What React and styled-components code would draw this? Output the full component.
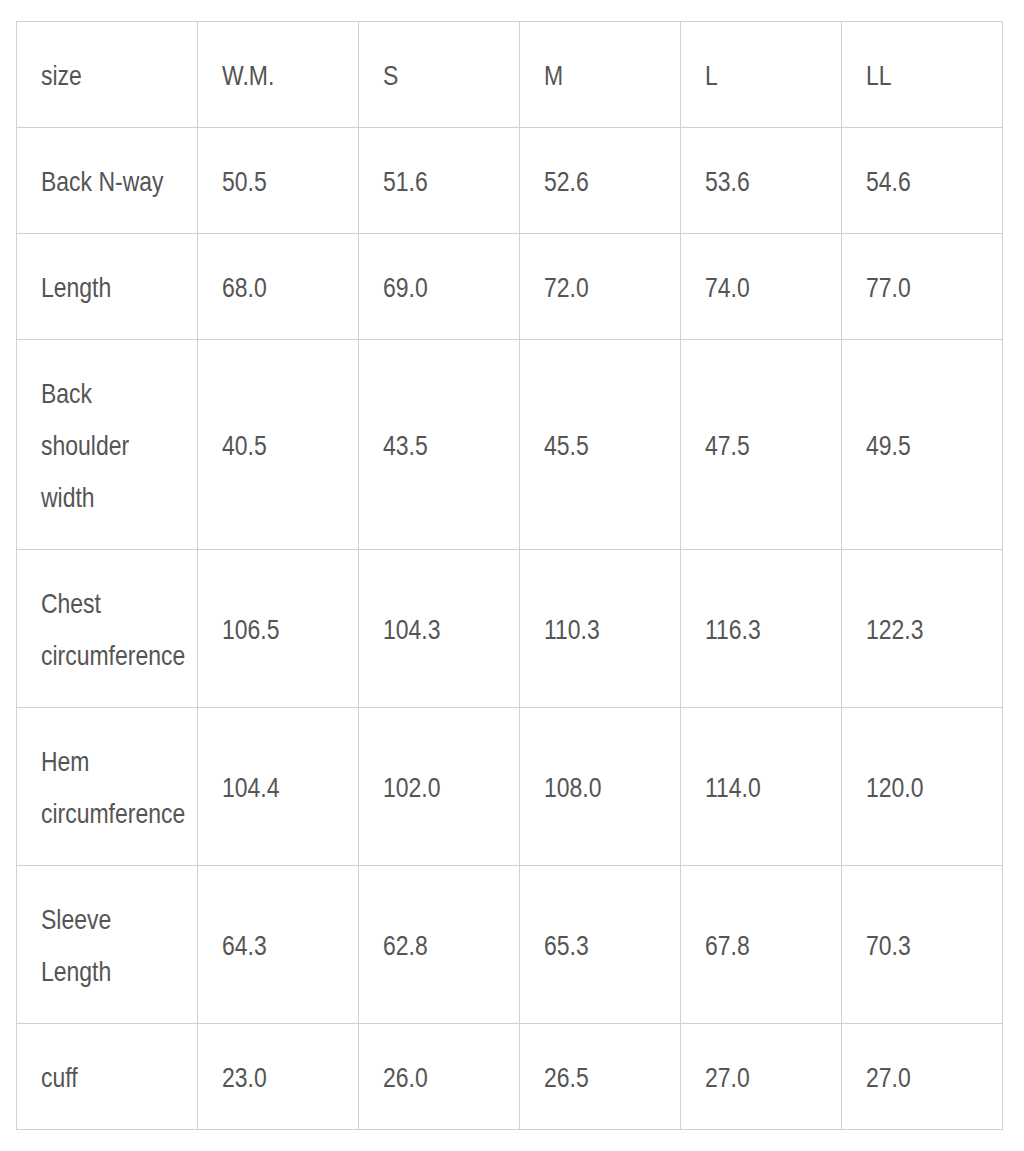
import React from "react";
import styled, { createGlobalStyle } from "styled-components";

const NARROW = 0.82;

const Global = createGlobalStyle`
  html, body {
    margin: 0;
    padding: 0;
    background: #ffffff;
  }
  body {
    font-family: "Liberation Sans", Arial, sans-serif;
  }
`;

const Page = styled.div`
  padding: 21px 16px 22px 16px;
`;

const Grid = styled.div`
  display: grid;
  grid-template-columns: 181px repeat(5, 161px);
  border-top: 1px solid #d0d0d0;
  border-left: 1px solid #d0d0d0;
  box-sizing: border-box;
  width: max-content;
`;

const Cell = styled.div`
  box-sizing: border-box;
  display: flex;
  align-items: center;
  padding: 28px 24px 25px 24px;
  border-right: 1px solid #d0d0d0;
  border-bottom: 1px solid #d0d0d0;
  font-family: "Liberation Sans", Arial, sans-serif;
  font-size: 28px;
  line-height: 52px;
  color: #555555;
  min-width: 0;
`;

/* Emulates the condensed face of the original: the text box is laid out
   wider by 1/NARROW and squeezed back, so wrapping matches the narrow width. */
const Label = styled.span`
  display: block;
  flex: none;
  width: calc(100% / ${NARROW});
  transform: scaleX(${NARROW});
  transform-origin: left center;
  white-space: normal;
  overflow-wrap: normal;
`;

const header = ["size", "W.M.", "S", "M", "L", "LL"];

const rows = [
  ["Back N-way", "50.5", "51.6", "52.6", "53.6", "54.6"],
  ["Length", "68.0", "69.0", "72.0", "74.0", "77.0"],
  ["Back shoulder width", "40.5", "43.5", "45.5", "47.5", "49.5"],
  ["Chest circumference", "106.5", "104.3", "110.3", "116.3", "122.3"],
  ["Hem circumference", "104.4", "102.0", "108.0", "114.0", "120.0"],
  ["Sleeve Length", "64.3", "62.8", "65.3", "67.8", "70.3"],
  ["cuff", "23.0", "26.0", "26.5", "27.0", "27.0"],
];

export default function App() {
  return (
    <Page>
      <Global />
      <Grid role="table">
        {header.map((h, i) => (
          <Cell key={`h-${i}`} role="columnheader">
            <Label>{h}</Label>
          </Cell>
        ))}
        {rows.map((row, r) =>
          row.map((v, c) => (
            <Cell key={`${r}-${c}`} role="cell">
              <Label>{v}</Label>
            </Cell>
          ))
        )}
      </Grid>
    </Page>
  );
}
